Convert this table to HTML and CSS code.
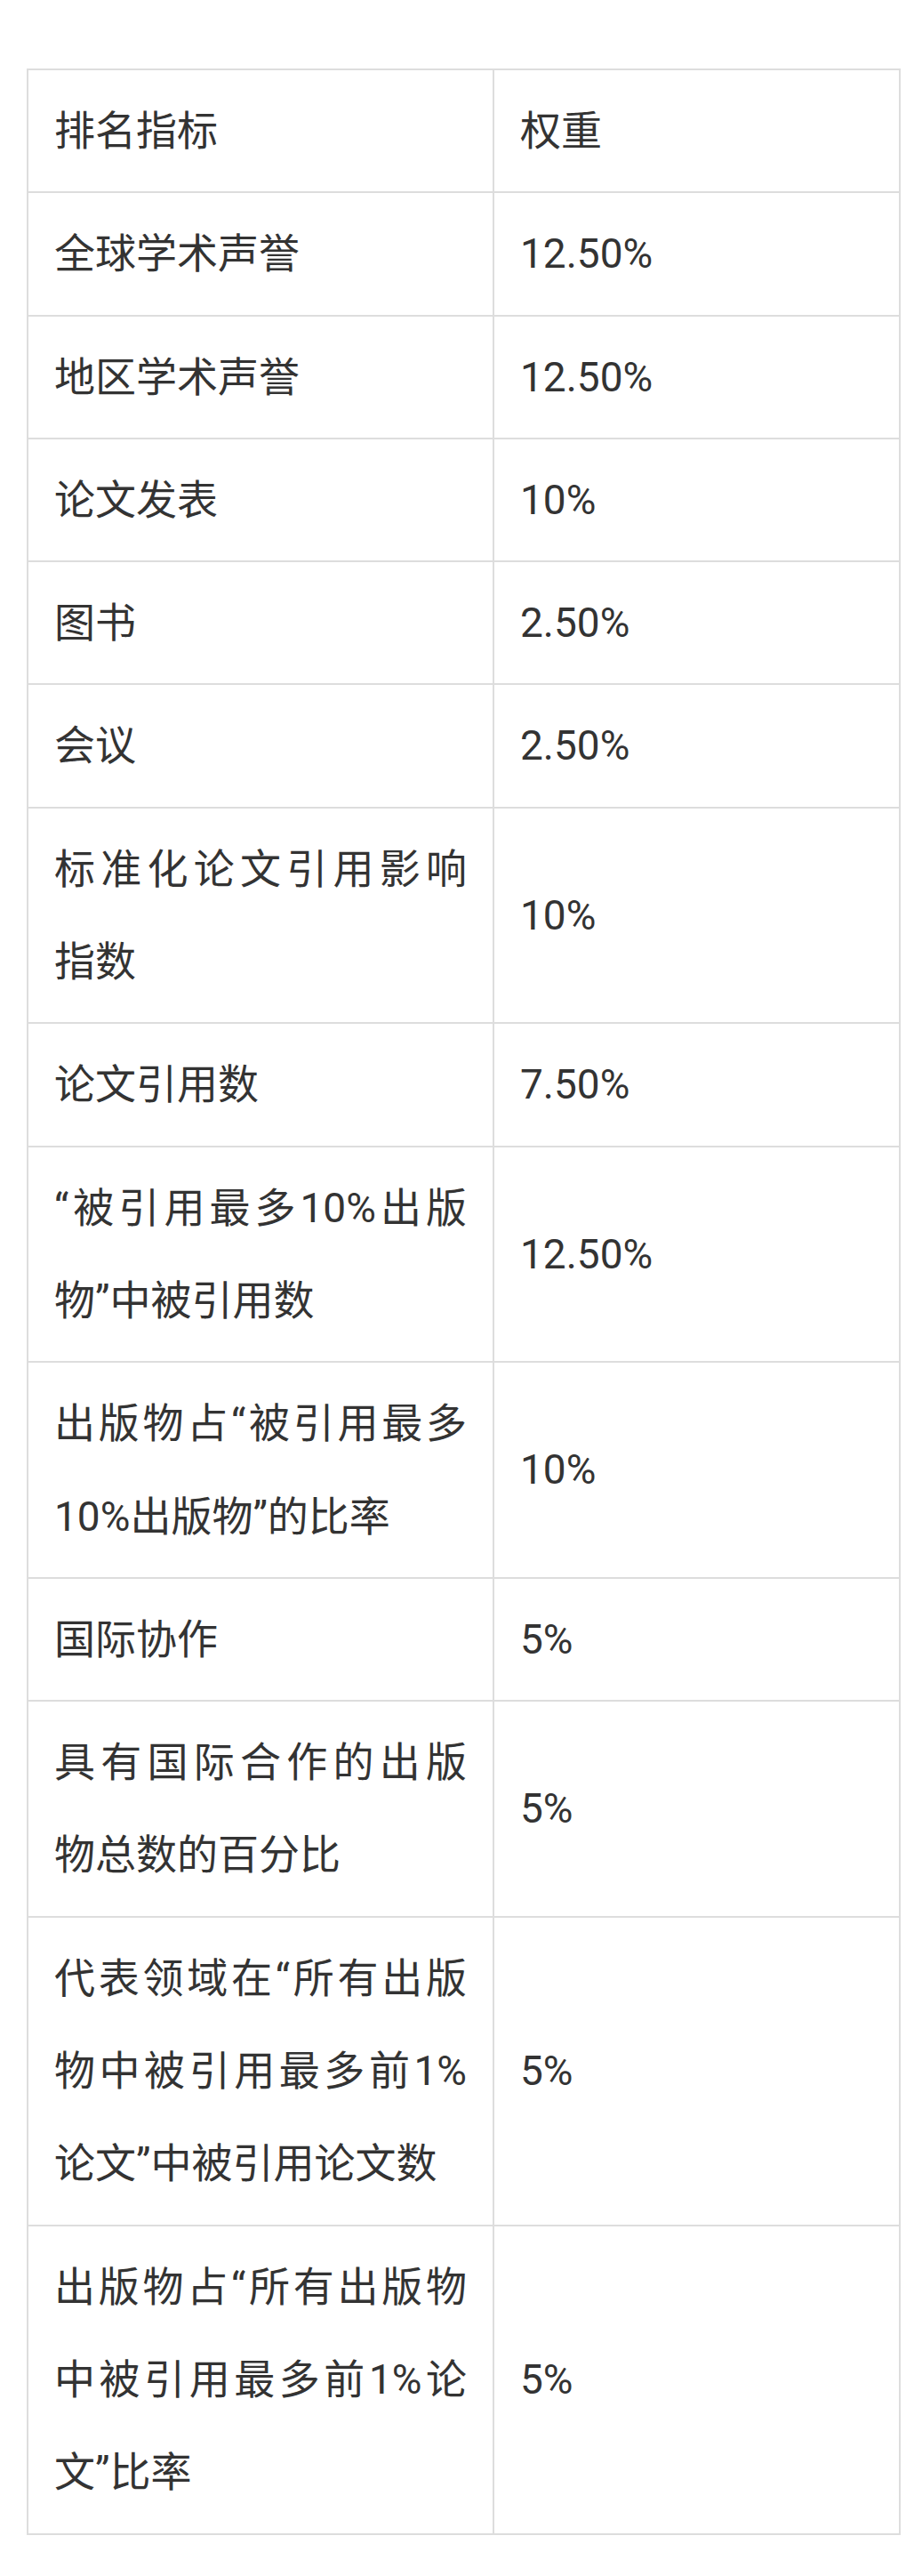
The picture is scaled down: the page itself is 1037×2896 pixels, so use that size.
FILE: index.html
```html
<!DOCTYPE html>
<html lang="zh-CN">
<head>
<meta charset="utf-8">
<title>排名指标与权重</title>
<link rel="stylesheet" href="styles.css">
</head>
<body>
<div class="page">
  <table class="weights">
    <colgroup><col class="c1"><col class="c2"></colgroup>
    <tbody>
      <tr><td>排名指标</td><td>权重</td></tr>
      <tr><td>全球学术声誉</td><td>12.50%</td></tr>
      <tr><td>地区学术声誉</td><td>12.50%</td></tr>
      <tr><td>论文发表</td><td>10%</td></tr>
      <tr><td>图书</td><td>2.50%</td></tr>
      <tr><td>会议</td><td>2.50%</td></tr>
      <tr><td><span class="ln j">标准化论文引用影响</span><span class="ln">指数</span></td><td>10%</td></tr>
      <tr><td>论文引用数</td><td>7.50%</td></tr>
      <tr><td><span class="ln j">“被引用最多10%出版</span><span class="ln">物”中被引用数</span></td><td>12.50%</td></tr>
      <tr><td><span class="ln j">出版物占“被引用最多</span><span class="ln">10%出版物”的比率</span></td><td>10%</td></tr>
      <tr><td>国际协作</td><td>5%</td></tr>
      <tr><td><span class="ln j">具有国际合作的出版</span><span class="ln">物总数的百分比</span></td><td>5%</td></tr>
      <tr><td><span class="ln j">代表领域在“所有出版</span><span class="ln j">物中被引用最多前1%</span><span class="ln">论文”中被引用论文数</span></td><td>5%</td></tr>
      <tr><td><span class="ln j">出版物占“所有出版物</span><span class="ln j">中被引用最多前1%论</span><span class="ln">文”比率</span></td><td>5%</td></tr>
    </tbody>
  </table>
</div>
</body>
</html>
```
FILE: styles.css
```css
html, body {
  margin: 0;
  padding: 0;
  background: #ffffff;
}

.page {
  padding: 77px 26px 44px 30px;
}

.weights {
  width: 981px;
  border-collapse: collapse;
  table-layout: fixed;
  font-family: Roboto, "Noto Sans CJK SC", sans-serif;
  font-size: 46px;
  line-height: 104.3px;
  color: #333333;
}

.weights .c1 {
  width: 524px;
}

.weights .c2 {
  width: 457px;
}

.weights td {
  border: 2px solid #dddddd;
  padding: 16px 29px;
  vertical-align: middle;
  text-align: left;
}

.ln {
  display: block;
  text-align: left;
}

.ln.j {
  text-align: justify;
  text-align-last: justify;
}
```
